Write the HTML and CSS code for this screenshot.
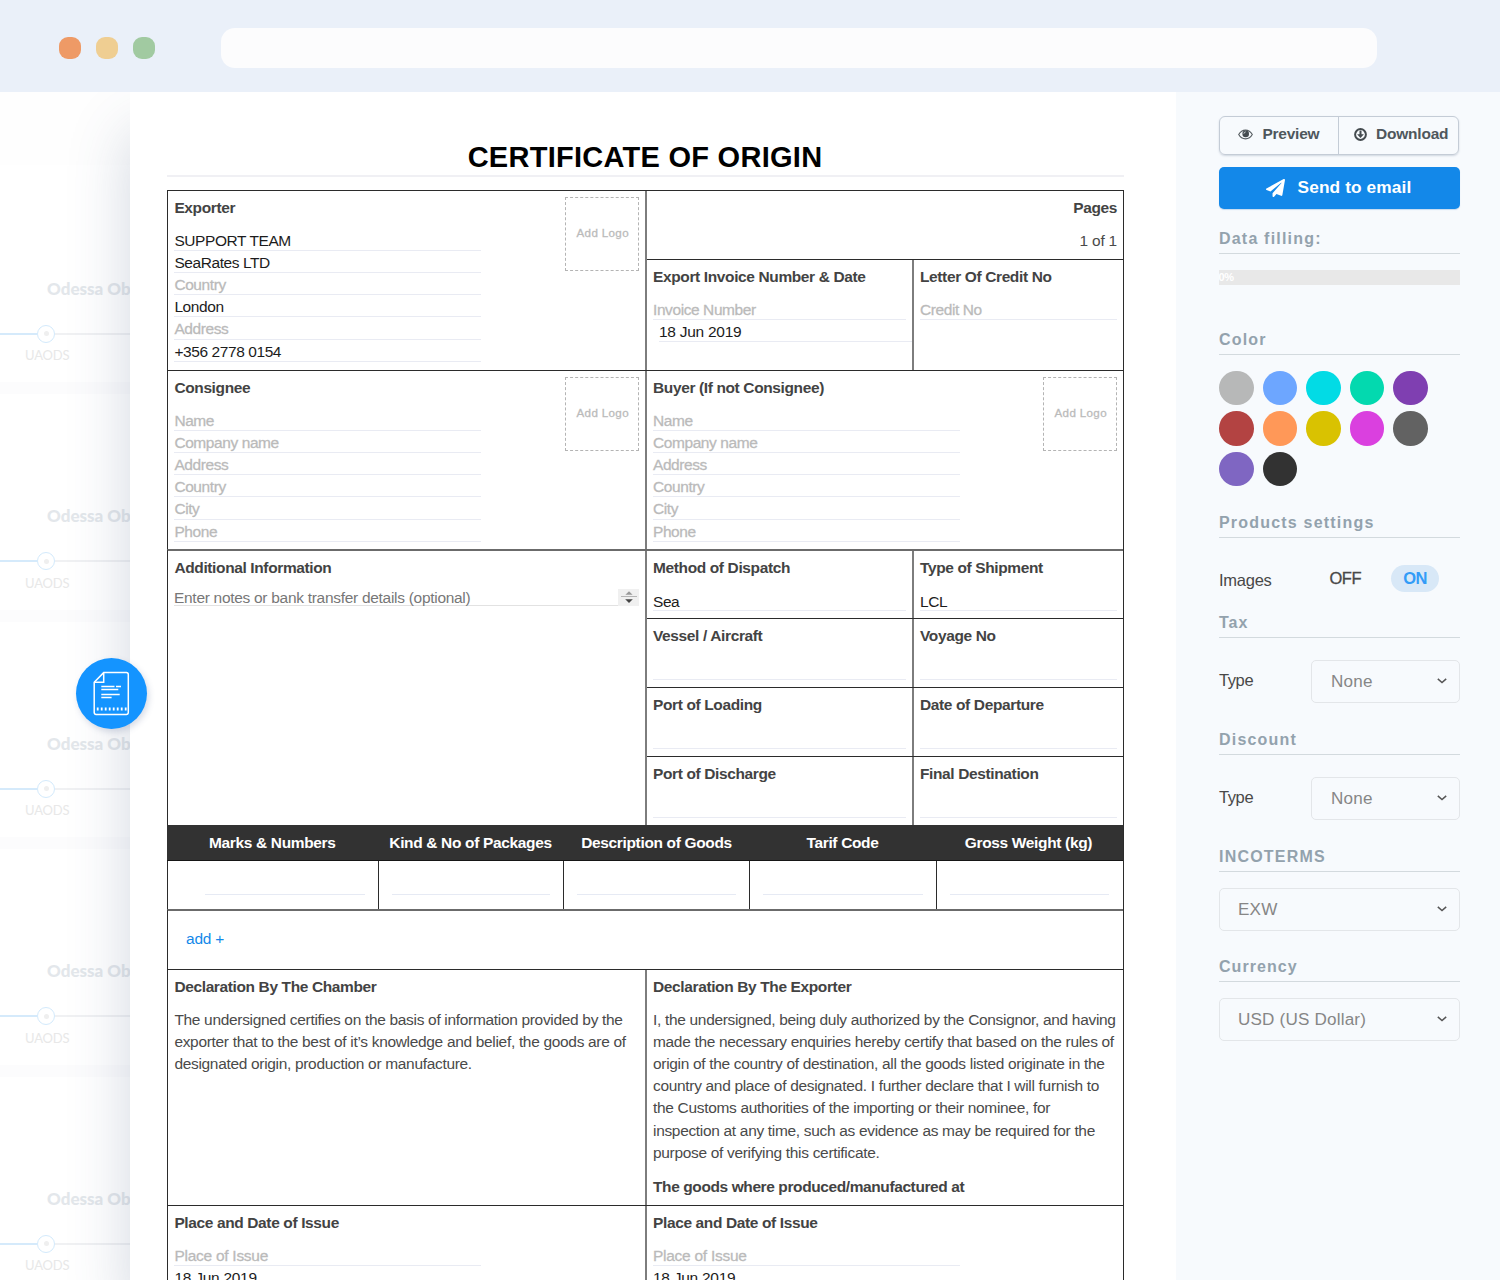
FILE: index.html
```
<!DOCTYPE html>
<html lang="en">
<head>
<meta charset="utf-8">
<title>Certificate of Origin</title>
<link rel="stylesheet" href="styles.css">
</head>
<body>
<div class="window">
  <header class="chrome">
    <span class="dot dot-red"></span><span class="dot dot-yellow"></span><span class="dot dot-green"></span>
    <div class="address"></div>
  </header>
  <div class="content">
    <aside class="backlist">
      <div class="back-head"></div>
      <div class="card"><h4>Odessa Ob</h4><div class="track"><i></i><b></b><s></s></div><p>UAODS</p></div>
      <div class="card"><h4>Odessa Ob</h4><div class="track"><i></i><b></b><s></s></div><p>UAODS</p></div>
      <div class="card"><h4>Odessa Ob</h4><div class="track"><i></i><b></b><s></s></div><p>UAODS</p></div>
      <div class="card"><h4>Odessa Ob</h4><div class="track"><i></i><b></b><s></s></div><p>UAODS</p></div>
      <div class="card"><h4>Odessa Ob</h4><div class="track"><i></i><b></b><s></s></div><p>UAODS</p></div>
    </aside>

    <main class="paper">
      <button class="fab" aria-label="Document">
        <svg width="71" height="71" viewBox="0 0 71 71" fill="none" stroke="#fff">
          <path d="M27.7 14.6H50.5a1.8 1.8 0 0 1 1.8 1.8V54.6a1.8 1.8 0 0 1-1.8 1.8H20a1.8 1.8 0 0 1-1.8-1.8V24.2z" stroke-width="1.5"/>
          <path d="M27.7 14.6v9.6h-9.5" stroke-width="1.5"/>
          <path d="M25.3 28.5h13.2M40 28.5h5M25.3 31.5h17M25.3 36.5h18.4M25.3 39.5h10.3" stroke-width="1.5"/>
          <path d="M20.8 51h30" stroke-width="3" stroke-dasharray="1.8 2.2"/>
        </svg>
      </button>
      <h1>CERTIFICATE OF ORIGIN</h1>
      <div class="form">
        <section class="row row-exporter">
          <div class="cell left party">
            <div class="fields">
              <h3>Exporter</h3>
              <div class="field">SUPPORT TEAM</div>
              <div class="field">SeaRates LTD</div>
              <div class="field hint">Country</div>
              <div class="field">London</div>
              <div class="field hint">Address</div>
              <div class="field">+356 2778 0154</div>
            </div>
            <div class="logo">Add Logo</div>
          </div>
          <div class="side">
            <div class="cell pages"><h3>Pages</h3><p>1 of 1</p></div>
            <div class="split grow">
              <div class="cell">
                <h3>Export Invoice Number &amp; Date</h3>
                <div class="field hint">Invoice Number</div>
                <div class="field date">18 Jun 2019</div>
              </div>
              <div class="cell">
                <h3>Letter Of Credit No</h3>
                <div class="field hint">Credit No</div>
              </div>
            </div>
          </div>
        </section>

        <section class="row row-consignee">
          <div class="cell left party">
            <div class="fields">
              <h3>Consignee</h3>
              <div class="field hint">Name</div>
              <div class="field hint">Company name</div>
              <div class="field hint">Address</div>
              <div class="field hint">Country</div>
              <div class="field hint">City</div>
              <div class="field hint">Phone</div>
            </div>
            <div class="logo">Add Logo</div>
          </div>
          <div class="cell right party">
            <div class="fields">
              <h3>Buyer (If not Consignee)</h3>
              <div class="field hint">Name</div>
              <div class="field hint">Company name</div>
              <div class="field hint">Address</div>
              <div class="field hint">Country</div>
              <div class="field hint">City</div>
              <div class="field hint">Phone</div>
            </div>
            <div class="logo">Add Logo</div>
          </div>
        </section>

        <section class="row row-shipment">
          <div class="cell left">
            <h3>Additional Information</h3>
            <div class="notes">
              <span>Enter notes or bank transfer details (optional)</span>
              <svg width="21" height="17" viewBox="0 0 21 17"><path fill="#f0f0f0" d="M0 0h21v17H0z"/><path stroke="#b5b5b5" d="M3 7.5h16"/><path fill="#999" d="M11 2.2l3.6 3.6H7.4z"/><path fill="#444" d="M11 14l3.8-3.8H7.2z"/></svg>
            </div>
          </div>
          <div class="side">
            <div class="split step"><div class="cell"><h3>Method of Dispatch</h3><div class="field pick">Sea</div></div><div class="cell"><h3>Type of Shipment</h3><div class="field pick">LCL</div></div></div>
            <div class="split step"><div class="cell"><h3>Vessel / Aircraft</h3><div class="field pick"></div></div><div class="cell"><h3>Voyage No</h3><div class="field pick"></div></div></div>
            <div class="split step"><div class="cell"><h3>Port of Loading</h3><div class="field pick"></div></div><div class="cell"><h3>Date of Departure</h3><div class="field pick"></div></div></div>
            <div class="split step"><div class="cell"><h3>Port of Discharge</h3><div class="field pick"></div></div><div class="cell"><h3>Final Destination</h3><div class="field pick"></div></div></div>
          </div>
        </section>

        <section class="goods">
          <div class="goods-head"><span>Marks &amp; Numbers</span><span>Kind &amp; No of Packages</span><span>Description of Goods</span><span>Tarif Code</span><span>Gross Weight (kg)</span></div>
          <div class="goods-row"><div><i></i></div><div><i></i></div><div><i></i></div><div><i></i></div><div><i></i></div></div>
        </section>
        <div class="add"><a>add +</a></div>

        <section class="row row-declaration">
          <div class="cell left">
            <h3>Declaration By The Chamber</h3>
            <p>The undersigned certifies on the basis of information provided by the<br>exporter that to the best of it’s knowledge and belief, the goods are of<br>designated origin, production or manufacture.</p>
          </div>
          <div class="cell right">
            <h3>Declaration By The Exporter</h3>
            <p>I, the undersigned, being duly authorized by the Consignor, and having<br>made the necessary enquiries hereby certify that based on the rules of<br>origin of the country of destination, all the goods listed originate in the<br>country and place of designated. I further declare that I will furnish to<br>the Customs authorities of the importing or their nominee, for<br>inspection at any time, such as evidence as may be required for the<br>purpose of verifying this certificate.</p>
            <h3 class="after">The goods where produced/manufactured at</h3>
          </div>
        </section>

        <section class="row row-issue">
          <div class="cell left party"><div class="fields"><h3>Place and Date of Issue</h3><div class="field hint wide">Place of Issue</div><div class="field wide">18 Jun 2019</div></div></div>
          <div class="cell right party"><div class="fields"><h3>Place and Date of Issue</h3><div class="field hint wide">Place of Issue</div><div class="field wide">18 Jun 2019</div></div></div>
        </section>
      </div>
    </main>

    <aside class="sidebar">
      <div class="btn-group">
        <button class="btn-preview">
          <svg width="15" height="11" viewBox="0 0 15 11"><path d="M.7 5.6C2.3 2.7 4.7 1.1 7.5 1.1s5.2 1.6 6.8 4.5c-1.6 2.9-4 4.3-6.8 4.3S2.3 8.5.7 5.6z" fill="none" stroke="#555c60" stroke-width="1.1"/><circle cx="7.7" cy="4.9" r="3.3" fill="#444b4f"/><path d="M5.9 4.7a1.9 1.9 0 0 1 1.8-1.8" fill="none" stroke="#e8edf1" stroke-width=".8"/></svg>
          <span>Preview</span>
        </button>
        <button class="btn-download">
          <svg width="13" height="13" viewBox="0 0 13 13"><circle cx="6.5" cy="6.5" r="5.4" fill="none" stroke="#444b4f" stroke-width="2"/><path d="M5.5 2.5h2v3.8h2.4L6.5 10 3.1 6.3h2.4z" fill="#444b4f"/></svg>
          <span>Download</span>
        </button>
      </div>
      <button class="btn-send">
        <svg width="19" height="18" viewBox="0 0 512 512" preserveAspectRatio="none" fill="#fff"><path d="M476 3.2L12.5 270.6c-18.1 10.4-15.8 35.6 2.2 43.2L121 358.4l287.3-253.2c5.5-4.9 13.3 2.6 8.6 8.3L176 407v80.500c0 23.600 28.500 32.900 42.500 15.800L282 426l124.600 52.200c14.200 6 30.400-2.900 33-18.200l72-432C515 7.800 493.300-6.800 476 3.200z"/></svg>
        <span>Send to email</span>
      </button>
      <h2 class="h-fill">Data filling:</h2>
      <div class="progress"><span>0%</span></div>
      <h2 class="h-color">Color</h2>
      <div class="swatches">
        <i class="c1"></i><i class="c2"></i><i class="c3"></i><i class="c4"></i><i class="c5"></i><i class="c6"></i><i class="c7"></i><i class="c8"></i><i class="c9"></i><i class="c10"></i><i class="c11"></i><i class="c12"></i>
      </div>
      <h2 class="h-products">Products settings</h2>
      <div class="toggle"><span class="name">Images</span><span class="off">OFF</span><span class="on">ON</span></div>
      <h2 class="h-tax">Tax</h2>
      <div class="option"><span class="name">Type</span><div class="select"><span>None</span><svg width="10" height="6" viewBox="0 0 10 6"><path d="M.8.9L5 4.5 9.2.9" fill="none" stroke="#555" stroke-width="1.5"/></svg></div></div>
      <h2 class="h-discount">Discount</h2>
      <div class="option"><span class="name">Type</span><div class="select"><span>None</span><svg width="10" height="6" viewBox="0 0 10 6"><path d="M.8.9L5 4.5 9.2.9" fill="none" stroke="#555" stroke-width="1.5"/></svg></div></div>
      <h2 class="h-terms">INCOTERMS</h2>
      <div class="select full"><span>EXW</span><svg width="10" height="6" viewBox="0 0 10 6"><path d="M.8.9L5 4.5 9.2.9" fill="none" stroke="#555" stroke-width="1.5"/></svg></div>
      <h2 class="h-currency">Currency</h2>
      <div class="select full currency"><span>USD (US Dollar)</span><svg width="10" height="6" viewBox="0 0 10 6"><path d="M.8.9L5 4.5 9.2.9" fill="none" stroke="#555" stroke-width="1.5"/></svg></div>
    </aside>
  </div>
</div>
</body>
</html>
```
FILE: styles.css
```
* { box-sizing: border-box; }
body { margin: 0; background: #fff; font-family: "Liberation Sans", Arial, sans-serif; font-size: 15.47px; line-height: 22.1px; color: #3c3c3c; }
h1, h2, h3, h4, p { margin: 0; }
button { font: inherit; border: 0; padding: 0; background: none; color: inherit; }
svg { display: block; flex: none; }

.window { height: 1280px; display: flex; flex-direction: column; overflow: hidden; }

/* Browser bar */
.chrome { height: 91.5px; flex: none; display: flex; align-items: center; padding: 4px 0 0 59px; background: #eaf0f9; position: relative; z-index: 2; }
.dot { width: 22px; height: 22px; border-radius: 9px; margin-right: 14.8px; }
.dot-red { background: #ee9a66; }
.dot-yellow { background: #efce92; }
.dot-green { background: #a1caa1; }
.address { width: 1156px; height: 39.5px; margin-left: 51.6px; border-radius: 14px; background: #fcfcfd; }

.content { flex: 1; display: flex; min-height: 0; }

/* Faded list behind the document */
.backlist { width: 130px; flex: none; font-family: Lato, sans-serif; white-space: nowrap; }
.back-head { height: 73px; background: #fefefe; }
.card { height: 227.6px; padding-top: 110px; border-bottom: 12px solid #fcfcfd; }
.card:nth-child(2) { height: 229.5px; padding-top: 112px; }
.card h4 { padding-left: 47px; font-size: 17px; font-weight: 900; line-height: 24px; color: #e3e7eb; }
.track { display: flex; align-items: center; height: 18px; margin-top: 24px; }
.track i { width: 37px; height: 2px; background: #d5eafb; }
.track b { width: 18px; height: 18px; border: 1.5px solid #d3eafc; border-radius: 50%; display: grid; place-items: center; }
.track b::after { content: ""; width: 5px; height: 5px; border-radius: 50%; background: #efefef; }
.track s { flex: 1; height: 2px; background: #f0f1f3; }
.card p { padding-left: 25px; font-size: 13px; line-height: 20px; margin-top: 2.5px; color: #e8e8e8; letter-spacing: -.2px; }

/* Document */
.paper { width: 1046px; flex: none; padding: 48.5px 52px 0 37px; background: #fff; position: relative; box-shadow: 0 40px 58px rgba(62, 82, 122, .23); }
.fab { position: absolute; left: -54px; top: 566px; width: 71px; height: 71px; border-radius: 50%; background: #1494ff; box-shadow: 2px 3px 6px rgba(60, 80, 130, .2); }
h1 { height: 36.5px; border-bottom: 2px solid #f0f0f4; margin-bottom: 13.5px; text-align: center; font-size: 29px; line-height: 35px; letter-spacing: .27px; text-indent: -1px; color: #000; }

.form { border-right: 1px solid #2b2b2b; white-space: nowrap; }
.row { display: flex; border-left: 1px solid #2b2b2b; border-top: 1px solid #2b2b2b; }
.cell { padding: 6px 6px 0; }
.cell h3, .fields h3 { font-size: 15.47px; line-height: 22.1px; letter-spacing: -.36px; margin-bottom: 10px; color: #434343; }
.cell p { letter-spacing: -.308px; color: #4a4a4a; padding-top: 1px; }
.left { width: 477px; flex: none; }
.left h3, .left p { padding-left: .4px; }
.right { flex: 1; border-left: 2px solid #7d7d7d; }
.side { flex: 1; display: flex; flex-direction: column; border-left: 2px solid #7d7d7d; }
.split { display: flex; border-top: 1px solid #2b2b2b; }
.split .cell { flex: 1; }
.split .cell:first-child { width: 265px; flex: none; }
.split .cell + .cell { border-left: 2px solid #7d7d7d; }
.grow { flex: 1; }
.field { height: 22.1px; padding-top: 2px; line-height: 20.4px; border-bottom: 1px solid #e9ebf3; letter-spacing: -.4px; color: #1c1c1c; }
.left .field { padding-left: .4px; }
.field.hint { color: #b9b9b9; -webkit-text-stroke: .3px #bdbdbd; }
.party { display: flex; justify-content: space-between; }
.fields { width: 307px; }
.field.wide { letter-spacing: -.25px; }
.logo { width: 74px; height: 74px; border: 1px dashed #b4b4b4; font-size: 11.6px; line-height: 70px; letter-spacing: .35px; padding-left: 10.5px; color: #b9b9b9; -webkit-text-stroke: .3px #bdbdbd; }

.row-exporter { height: 180px; }
.row-consignee { height: 179px; }
.row-shipment { height: 276px; border-top: 2px solid #6b6b6b; }
.row-shipment > .left { padding-top: 6px; }
.row-declaration { height: 236px; }
.row-issue { height: 120px; }

.pages { height: 68px; text-align: right; }
.pages p { letter-spacing: -.2px; }
.field.date { margin-left: 6px; margin-right: -6px; letter-spacing: -.25px; }
.step { height: 69px; }
.step:first-child { border-top: 0; height: 67.5px; }
.step:first-child .cell { padding-top: 6px; }
.pick { height: 23px; padding-top: 4px; line-height: 20px; }
.step:first-child .pick { height: 22px; padding-top: 3px; }
.notes { display: flex; justify-content: space-between; height: 18.5px; margin-top: -1.5px; padding-top: 1px; border-bottom: 1px solid #e2e2e2; line-height: 18px; letter-spacing: -.28px; color: #777; }

.goods-head { display: flex; height: 36px; background: #323232; border-bottom: 1px solid #161616; color: #fff; font-weight: 700; letter-spacing: -.33px; line-height: 36px; text-align: center; }
.goods-row { display: flex; height: 48px; border-left: 1px solid #2b2b2b; }
.goods-head span, .goods-row div { width: 186px; }
.goods-head span:first-child { width: 210.5px; }
.goods-row div { padding: 0 13px 0 12.5px; border-left: 1px solid #2b2b2b; }
.goods-row div:first-child { width: 210px; padding-left: 37px; border-left: 0; }
.goods-row div:nth-child(2) { width: 185px; }
.goods-row div:nth-child(4) { width: 187px; }
.goods-row i { display: block; height: 34px; border-bottom: 1px solid #e6eaf4; }
.add { height: 60px; padding: 17px 0 0 18px; border-left: 1px solid #2b2b2b; border-top: 2px solid #6b6b6b; color: #1388e9; letter-spacing: -.2px; }
.row-declaration .after { margin-top: 12px; letter-spacing: -.383px; }

/* Settings panel */
.sidebar { flex: 1; padding: 24.5px 40px 0 43px; background: #f7fafd; position: relative; }
.btn-group { display: flex; height: 38.5px; width: 240px; border: 1px solid #c4ccd6; border-radius: 6px; box-shadow: 0 1px 2px rgba(90, 110, 140, .25); font-weight: 700; color: #4f575c; }
.btn-group button { display: flex; align-items: center; height: 36.5px; padding-bottom: 2px; }
.btn-group .btn-preview { width: 119px; padding-left: 18px; }
.btn-group .btn-download { flex: 1; padding-left: 15px; box-shadow: -1px 0 #c4ccd6; }
.btn-preview span { margin-left: 9.5px; letter-spacing: -.24px; }
.btn-download span { margin-left: 9px; letter-spacing: -.2px; }
.btn-send { display: flex; align-items: center; width: 241px; height: 42px; margin-top: 12px; padding-left: 47px; border-radius: 5px; background: #1388e9; color: #fff; font-size: 17.3px; font-weight: 700; box-shadow: 0 1px 1px rgba(40, 120, 200, .25); }
.btn-send span { margin-left: 12.5px; letter-spacing: .12px; }
h2 { height: 26px; border-bottom: 1px solid #d3dade; font-size: 16px; line-height: 22px; letter-spacing: 1.2px; color: #93a2ad; white-space: nowrap; }
.h-fill { margin-top: 19px; }
.progress { height: 15px; margin-top: 16px; background: #e8e8e8; color: #fff; font-size: 11px; font-weight: 700; line-height: 14px; letter-spacing: -.3px; text-indent: -.5px; }
.h-color { margin-top: 44px; }
.swatches { display: grid; grid-template-columns: repeat(5, 34.5px); gap: 6.2px 9.1px; margin-top: 16px; }
.swatches i { height: 34.5px; border-radius: 50%; }
.c1 { background: #b7b8b8; } .c2 { background: #6da6ff; } .c3 { background: #02dbe5; } .c4 { background: #03d9af; }
.c5 { background: #7f3fb1; } .c6 { background: #b34342; } .c7 { background: #ff9858; } .c8 { background: #d9c201; }
.c9 { background: #da40df; } .c10 { background: #626262; } .c11 { background: #7f66c2; } .c12 { background: #323232; }
.h-products { margin-top: 26px; }
.toggle { display: flex; height: 27px; margin-top: 27px; line-height: 26px; font-size: 16.5px; color: #484848; }
.name { color: #484848; font-size: 16.5px; letter-spacing: -.25px; }
.toggle .name { width: 110.5px; padding-top: 2px; }
.off { width: 61.5px; letter-spacing: -.5px; -webkit-text-stroke: .3px #484848; }
.on { width: 48px; border-radius: 14px; background: #d8e8f7; color: #339cf7; font-weight: 700; text-align: center; letter-spacing: -.6px; }
.h-tax { margin-top: 19.5px; letter-spacing: 1px; }
.option { display: flex; align-items: center; justify-content: space-between; margin-top: 22px; }
.option .name { padding-bottom: 2.5px; letter-spacing: -.4px; }
.select { display: flex; align-items: center; justify-content: space-between; width: 149px; height: 43px; padding: 0 12px 0 19px; border: 1px solid #e3e6e9; border-radius: 5px; font-size: 17.1px; letter-spacing: .18px; color: #868686; }
.select span { padding-top: 1px; }
.select svg { margin-top: -1px; }
.full { width: 100%; margin-top: 16px; padding-left: 18px; }
.h-discount, .h-terms { margin-top: 26px; }
.h-currency { margin-top: 25px; letter-spacing: 1.05px; }
```
